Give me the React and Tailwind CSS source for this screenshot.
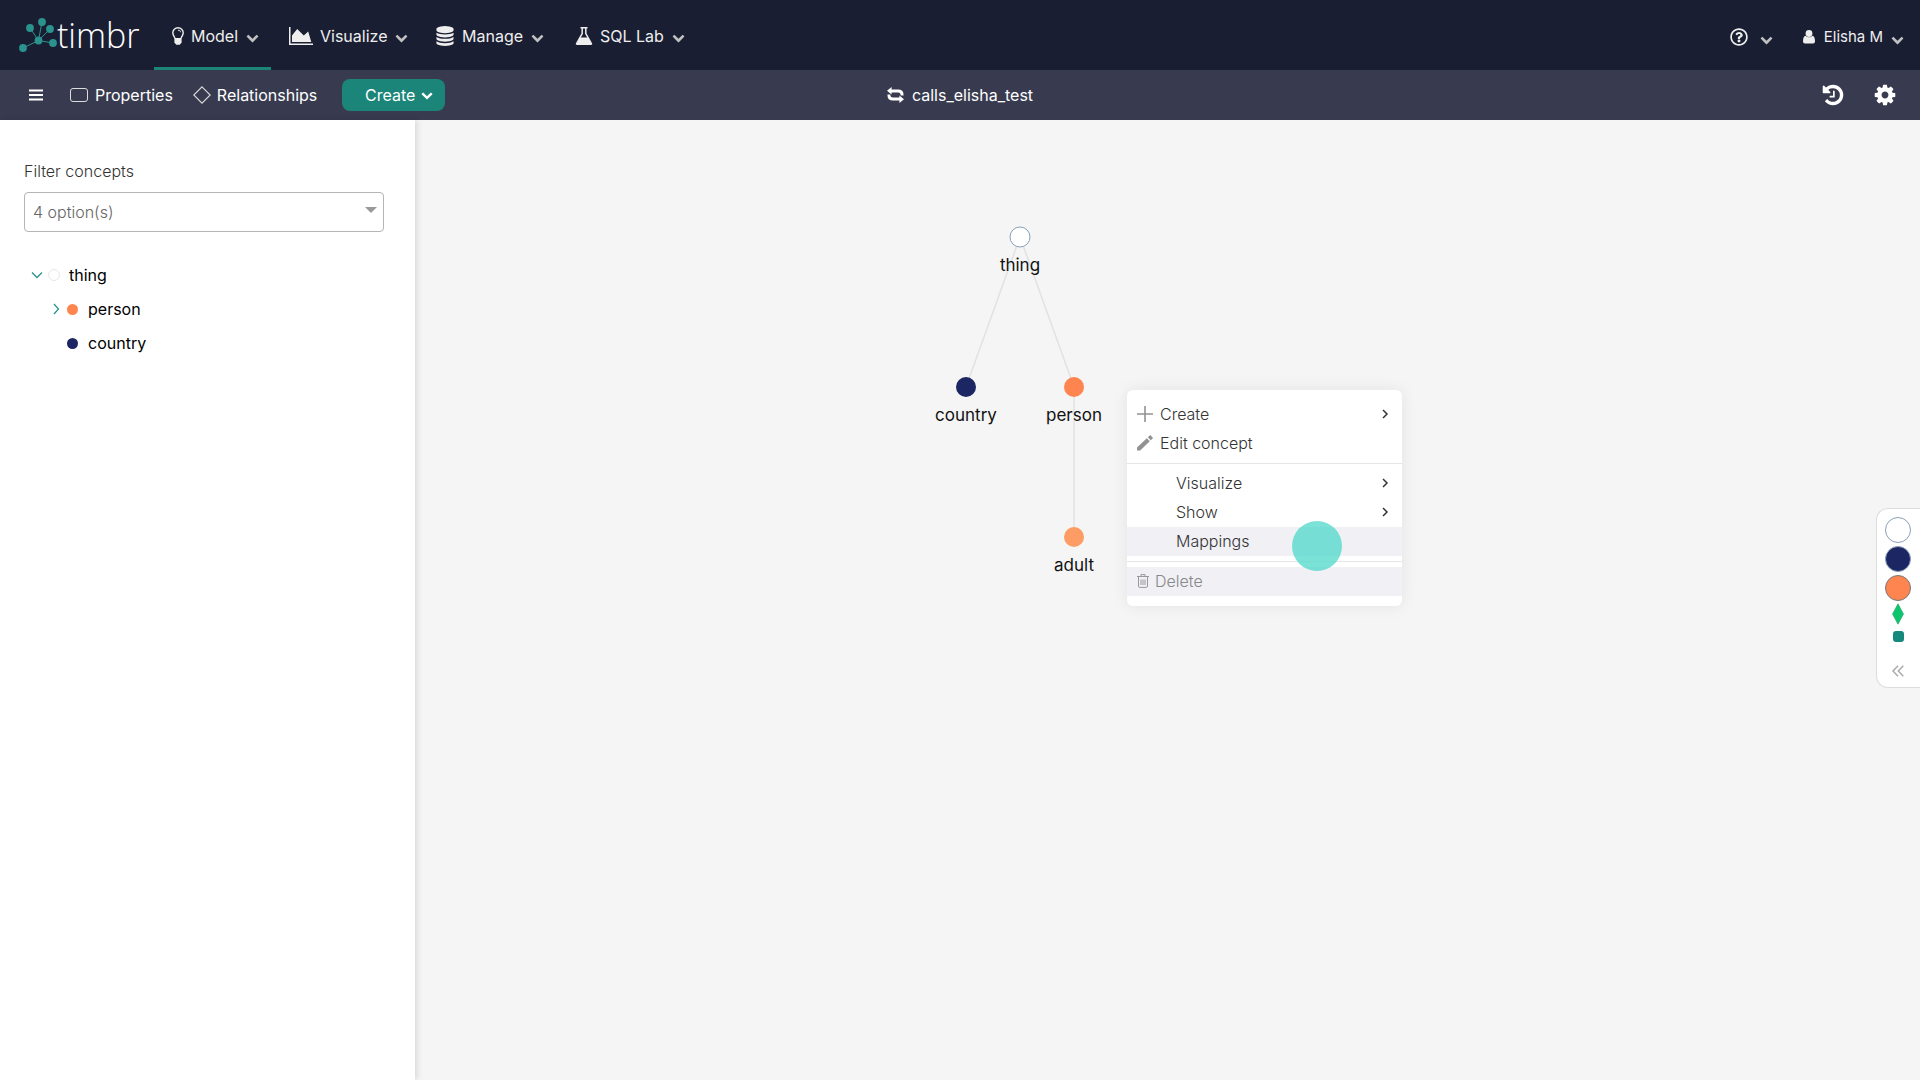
import React from 'react';
import { FaRegQuestionCircle } from 'react-icons/fa';

const paths = {
  chevron: 'M1683 808l-742 741q-19 19-45 19t-45-19l-742-741q-19-19-19-45.5t19-45.5l166-165q19-19 45-19t45 19l531 531 531-531q19-19 45-19t45 19l166 165q19 19 19 45.5t-19 45.5z',
  database: 'M896 768q237 0 443-43t325-127v170q0 69-103 128t-280 93.5-385 34.5-385-34.5-280-93.5-103-128v-170q119 84 325 127t443 43zm0 768q237 0 443-43t325-127v170q0 69-103 128t-280 93.5-385 34.5-385-34.5-280-93.5-103-128v-170q119 84 325 127t443 43zm0-384q237 0 443-43t325-127v170q0 69-103 128t-280 93.5-385 34.5-385-34.5-280-93.5-103-128v-170q119 84 325 127t443 43zm0-1152q208 0 385 34.5t280 93.5 103 128v128q0 69-103 128t-280 93.5-385 34.5-385-34.5-280-93.5-103-128v-128q0-69 103-128t280-93.5 385-34.5z',
  history: 'M1664 896q0 156-61 298t-164 245-245 164-298 61q-172 0-327-72.5t-264-204.5q-7-10-6.5-22.5t8.5-20.5l137-138q10-9 25-9 16 2 23 12 73 95 179 147t225 52q104 0 198.5-40.5t163.5-109.5 109.5-163.5 40.5-198.5-40.5-198.5-109.5-163.5-163.5-109.5-198.5-40.5q-98 0-188 35.5t-160 101.5l137 138q31 30 14 69-17 40-59 40h-448q-26 0-45-19t-19-45v-448q0-42 40-59 39-17 69 14l130 129q107-101 244.500-156.500t284.500-55.500q156 0 298 61t245 164 164 245 61 298zm-640-288v448q0 14-9 23t-23 9h-320q-14 0-23-9t-9-23v-64q0-14 9-23t23-9h224v-352q0-14 9-23t23-9h64q14 0 23 9t9 23z',
  cog: 'M1152 896q0-106-75-181t-181-75-181 75-75 181 75 181 181 75 181-75 75-181zm512-109v222q0 12-8 23t-20 13l-185 28q-19 54-39 91 35 50 107 138 10 12 10 25t-9 23q-27 37-99 108t-94 71q-12 0-26-9l-138-108q-44 23-91 38-16 136-29 186-7 28-36 28h-222q-14 0-24.5-8.5t-11.5-21.5l-28-184q-49-16-90-37l-141 107q-10 9-25 9-14 0-25-11-126-114-165-168-7-10-7-23 0-12 8-23 15-21 51-66.5t54-70.5q-27-50-41-99l-183-27q-13-2-21-12.5t-8-23.5v-222q0-12 8-23t19-13l186-28q14-46 39-92-40-57-107-138-10-12-10-24 0-10 9-23 26-36 98.5-107.5t94.5-71.5q13 0 26 10l138 107q44-23 91-38 16-136 29-186 7-28 36-28h222q14 0 24.5 8.5t11.5 21.5l28 184q49 16 90 37l142-107q9-9 24-9 13 0 25 10 129 119 165 170 7 8 7 22 0 12-8 23-15 21-51 66.5t-54 70.5q26 50 41 98l183 28q13 2 21 12.5t8 23.5z',
};

function Glyph({ name, className }) {
  return (
    <svg viewBox="0 0 1792 1792" fill="currentColor" className={className} aria-hidden="true">
      <path d={paths[name]} />
    </svg>
  );
}

function Bulb() {
  return (
    <svg viewBox="0 0 12 18" className="h-[18px] w-3 shrink-0" aria-hidden="true">
      <path d="M3 11.5C2.8 9.5 .8 8.6 .8 5.7a5.2 5 0 0 1 10.4 0c0 2.900-2 3.800-2.200 5.800" fill="none" stroke="currentColor" strokeWidth="1.400" />
      <path d="M6 3.200c1.500 0 2.600.900 2.600 2" fill="none" stroke="currentColor" strokeWidth="1" />
      <path d="M2.400 11h7.200v4.500L7.800 17.800H4.200L2.400 15.500z" fill="currentColor" />
    </svg>
  );
}

function AreaChart() {
  return (
    <svg viewBox="0 0 24 18" className="h-[18px] w-6 shrink-0" fill="currentColor" aria-hidden="true">
      <path d="M0 0h1.500v16.500H24V18H0zM3 15V8.500L8.200 2l6.600 6.500 4.400-4L22.300 15z" />
    </svg>
  );
}

function Flask() {
  return (
    <svg viewBox="0 0 18 18" className="size-[18px] shrink-0" aria-hidden="true">
      <path d="M5.500.8h7M7.200 1v5.500L1.600 16.500q-.3.700.5.700h13.800q.8 0 .5-.7L10.800 6.500V1" fill="none" stroke="currentColor" strokeWidth="1.500" />
      <path d="M5 10.500h8l3.500 6.500h-15z" fill="currentColor" />
    </svg>
  );
}

function User() {
  return (
    <svg viewBox="0 0 12 14" className="h-[14px] w-3" fill="currentColor" aria-hidden="true">
      <circle cx="6" cy="3.500" r="3.400" />
      <path d="M2.500 5.800Q6 8.800 9.500 5.800 12 6.500 12 11.500q0 2-2 2H2q-2 0-2-2 0-5 2.500-5.700z" />
    </svg>
  );
}

function Logo() {
  const dots = [[4, 30], [11, 10], [23, 4], [31, 11], [34, 25], [19.5, 22.5]];
  return (
    <a href="#" className="flex h-full w-[154px] shrink-0 items-center pl-[19px] text-white" aria-label="timbr">
      <svg viewBox="0 0 38 34" className="h-[34px] w-[38px]" aria-hidden="true">
        {dots.map(([x, y]) => (
          <line key={x} x1="19.5" y1="22.5" x2={x} y2={y} stroke="#2b938e" strokeWidth="1" />
        ))}
        {dots.map(([x, y]) => (
          <circle key={x} cx={x} cy={y} r="3.9" fill="#2b938e" />
        ))}
      </svg>
      <span className="font-['Open_Sans',sans-serif] text-[34px] font-light leading-10">timbr</span>
    </a>
  );
}

function NavItem({ icon, label, active, width }) {
  return (
    <button className={`flex h-[70px] shrink-0 items-center border-b-[3px] pl-[18px] pt-1 ${width} ${active ? 'border-[#1b8579]' : 'border-transparent'}`}>
      {icon}
      <span className="ml-[7px]">{label}</span>
      <Glyph name="chevron" className="ml-2 mt-1 size-[13px] text-[#c1c1c1]" />
    </button>
  );
}

function Caret({ down = false }) {
  return (
    <svg viewBox="0 0 12 12" className="size-3 shrink-0" fill="none" stroke="#2b938e" strokeWidth="1.300" aria-hidden="true">
      <path d={down ? 'M1 3.500L6 8.500l5-5' : 'M4 1l4.500 5L4 11'} />
    </svg>
  );
}

function MenuRow({ icon, label, arrow, inset, shaded, muted }) {
  return (
    <li>
      <button disabled={muted} className={`flex h-[29px] w-full items-center pb-px pr-[13px] text-left ${inset ? 'pl-[49px]' : 'pl-[10px]'} ${shaded ? 'bg-[#f0f0f5]' : ''} ${muted ? 'text-[#888]' : 'text-[#333]'}`}>
        {icon}
        <span>{label}</span>
        {arrow && (
          <svg viewBox="0 0 8 10" className="ml-auto h-[10px] w-2" fill="none" stroke="#333" strokeWidth="1.500" aria-hidden="true">
            <path d="M2 1l4 4-4 4" />
          </svg>
        )}
      </button>
    </li>
  );
}

function ContextMenu() {
  return (
    <div className="absolute left-[712px] top-[270px] w-[275px] rounded-md bg-white pb-[10px] pt-[10px] font-light shadow-[0_0_16px_rgba(0,0,0,0.08)]">
      <ul>
        <MenuRow
          label="Create"
          arrow
          icon={
            <svg viewBox="0 0 16 16" className="mr-[7px] size-4" stroke="#929292" strokeWidth="1.600" aria-hidden="true">
              <path d="M8 0v16M0 8h16" />
            </svg>
          }
        />
        <MenuRow
          label="Edit concept"
          icon={
            <svg viewBox="0 0 16 16" className="mr-[7px] size-4" fill="#929292" aria-hidden="true">
              <path d="M0 12.500L9.800 3.200l3 3L3.200 15.500H0zM10.800 2.300L12.600.600q.6-.6 1.200 0l1.800 1.800q.6.600 0 1.100L13.800 5.200z" />
            </svg>
          }
        />
      </ul>
      <ul className="mt-[5px] border-t border-[#e6e6e6] pt-[5px]">
        <MenuRow label="Visualize" arrow inset />
        <MenuRow label="Show" arrow inset />
        <MenuRow label="Mappings" inset shaded />
      </ul>
      <ul className="mt-[5px] border-t border-[#e6e6e6] pt-[5px]">
        <MenuRow
          label="Delete"
          shaded
          muted
          icon={
            <svg viewBox="0 0 12 14" className="mr-[6px] h-[14px] w-3" fill="none" stroke="#999" aria-hidden="true">
              <path d="M0 2.500h12M4 2V.6h4V2M1.500 3v9q0 1.400 1.300 1.400h6.400q1.300 0 1.300-1.400V3M4 5.500v5.500M6 5.500v5.500M8 5.500v5.500" />
            </svg>
          }
        />
      </ul>
      <span className="absolute left-[165px] top-[131px] size-[50px] rounded-full bg-[#4dd8c8]/75" />
    </div>
  );
}

function Graph() {
  const nodes = [
    { label: 'thing', x: 605, y: 117, fill: '#fff', stroke: '#8aa0bb' },
    { label: 'country', x: 551, y: 267, fill: '#1c2662' },
    { label: 'person', x: 659, y: 267, fill: '#fe854f' },
    { label: 'adult', x: 659, y: 417, fill: '#fe9c66' },
  ];
  return (
    <svg className="absolute left-0 top-0 size-full" role="img" aria-label="Concept graph">
      <g stroke="#e2e2e2" strokeWidth="1.500">
        <line x1="605" y1="117" x2="551" y2="267" />
        <line x1="605" y1="117" x2="659" y2="267" />
        <line x1="659" y1="267" x2="659" y2="417" />
      </g>
      {nodes.map((n) => (
        <g key={n.label}>
          <circle cx={n.x} cy={n.y} r="10" fill={n.fill} stroke={n.stroke || n.fill} strokeWidth={n.stroke ? 1 : 0} />
          <text x={n.x} y={n.y + 34} textAnchor="middle" fill="#111" className="text-[17px]">{n.label}</text>
        </g>
      ))}
    </svg>
  );
}

function Legend() {
  return (
    <aside className="absolute right-0 top-[388px] flex w-[44px] flex-col items-center rounded-l-xl border border-r-0 border-[#dcdcdc] bg-white pb-[10px] pr-px pt-2">
      <div className="flex flex-col items-center gap-[3px]">
        <span className="size-[26px] rounded-full border border-[#8aa0bb] bg-white" />
        <span className="size-[26px] rounded-full border border-[#8aa0bb] bg-[#1c2662]" />
        <span className="size-[26px] rounded-full border border-[#777] bg-[#fe854f]" />
      </div>
      <svg viewBox="0 0 12 22" className="mt-[2px] h-[22px] w-3" fill="#0cc56c" stroke="#22a565" strokeWidth=".6" aria-hidden="true">
        <path d="M6 .8L11.500 11 6 21.200.5 11z" />
      </svg>
      <span className="mt-[6px] size-[11px] rounded-[3px] bg-[#17897c]" />
      <button className="mt-[23px]" aria-label="Expand legend">
        <svg viewBox="0 0 12 12" className="size-3" fill="none" stroke="#aaa" strokeWidth="1.500" aria-hidden="true">
          <path d="M6 .7L1 6l5 5.300M11.300.7l-5 5.300 5 5.300" />
        </svg>
      </button>
    </aside>
  );
}

export default function App() {
  return (
    <div className="flex min-h-screen flex-col overflow-hidden bg-[#f5f5f5] font-['Inter',sans-serif] text-base leading-6">
      <header className="flex h-[70px] items-center bg-[#1a1e32] text-[#eee]">
        <Logo />
        <nav className="flex">
          <NavItem active width="w-[117px]" label="Model" icon={<Bulb />} />
          <NavItem width="w-[146px]" label="Visualize" icon={<AreaChart />} />
          <NavItem width="w-[140px]" label="Manage" icon={<Glyph name="database" className="size-5 shrink-0" />} />
          <NavItem width="w-[136px]" label="SQL Lab" icon={<Flask />} />
        </nav>
        <div className="ml-auto flex items-center gap-[30px] pr-4 pt-1">
          <button className="flex items-center gap-3" aria-label="Help">
            <FaRegQuestionCircle className="size-[18px]" />
            <Glyph name="chevron" className="mt-1 size-[13px] text-[#c1c1c1]" />
          </button>
          <button className="flex items-center text-[15px]">
            <User />
            <span className="ml-[9px]">Elisha M</span>
            <Glyph name="chevron" className="ml-2 mt-1 size-[13px] text-[#c1c1c1]" />
          </button>
        </div>
      </header>

      <div className="grid h-[50px] grid-cols-[1fr_auto_1fr] items-center bg-[#383b4f] text-white">
        <div className="flex items-center pl-[29px]">
          <button aria-label="Menu">
            <svg viewBox="0 0 14 12" className="h-3 w-[14px]" stroke="currentColor" strokeWidth="2" aria-hidden="true">
              <path d="M0 1.500h14M0 6h14M0 10.500h14" />
            </svg>
          </button>
          <button className="ml-[27px] flex items-center gap-[7px]">
            <span className="h-[14px] w-[18px] rounded-[3px] border border-[#ddd]" />
            Properties
          </button>
          <button className="ml-5 flex items-center gap-[6px]">
            <svg viewBox="0 0 18 18" className="size-[18px]" fill="none" stroke="#ddd" strokeWidth="1.100" aria-hidden="true">
              <path d="M9 .8L17.200 9 9 17.200.8 9z" />
            </svg>
            Relationships
          </button>
          <button className="ml-[25px] flex h-8 w-[103px] items-center justify-end gap-[6px] rounded-lg bg-[#1b8579] pr-3">
            Create
            <Glyph name="chevron" className="size-3" />
          </button>
        </div>
        <button className="flex items-center gap-2">
          <svg viewBox="0 0 17 16" className="h-4 w-[17px]" fill="currentColor" aria-hidden="true">
            <path d="M0 3.800L4.600 0v2.400H11q5.500 0 5.500 5v1h-2.800q0-3-2.700-3H4.600v2.200zM17 12.200L12.400 16v-2.400H6q-5.500 0-5.500-5v-1h2.800q0 3 2.700 3h6.400V8.400z" />
          </svg>
          calls_elisha_test
        </button>
        <div className="flex justify-end gap-7 pr-[23px]">
          <button aria-label="History"><Glyph name="history" className="size-6" /></button>
          <button aria-label="Settings"><Glyph name="cog" className="size-6" /></button>
        </div>
      </div>

      <main className="flex grow">
        <aside className="z-10 w-[415px] shrink-0 bg-white px-6 pt-[39px] shadow-[2px_0_6px_rgba(0,0,0,0.12)]">
          <label htmlFor="filter" className="block font-light text-[#333]">Filter concepts</label>
          <div className="relative mt-[9px] w-[360px]">
            <select id="filter" className="h-10 w-full appearance-none rounded border border-[#b5b5b5] bg-white px-2 font-light text-[#666]">
              <option>4 option(s)</option>
            </select>
            <span className="pointer-events-none absolute right-[7px] top-[15px] border-x-[6px] border-t-[6px] border-x-transparent border-t-[#999]" />
          </div>
          <ul className="mt-[26px] text-black">
            <li className="flex h-[34px] items-center pl-[7px]">
              <Caret down />
              <span className="ml-[5px] size-3 rounded-full border border-[#e8e8e8]" />
              <span className="ml-[9px]">thing</span>
            </li>
            <li className="flex h-[34px] items-center pl-[26px]">
              <Caret />
              <span className="ml-[5px] size-[11px] rounded-full bg-[#fe854f]" />
              <span className="ml-[10px]">person</span>
            </li>
            <li className="flex h-[34px] items-center pl-[43px]">
              <span className="size-[11px] rounded-full bg-[#1c2662]" />
              <span className="ml-[10px]">country</span>
            </li>
          </ul>
        </aside>
        <section className="relative grow">
          <Graph />
          <ContextMenu />
          <Legend />
        </section>
      </main>
    </div>
  );
}
